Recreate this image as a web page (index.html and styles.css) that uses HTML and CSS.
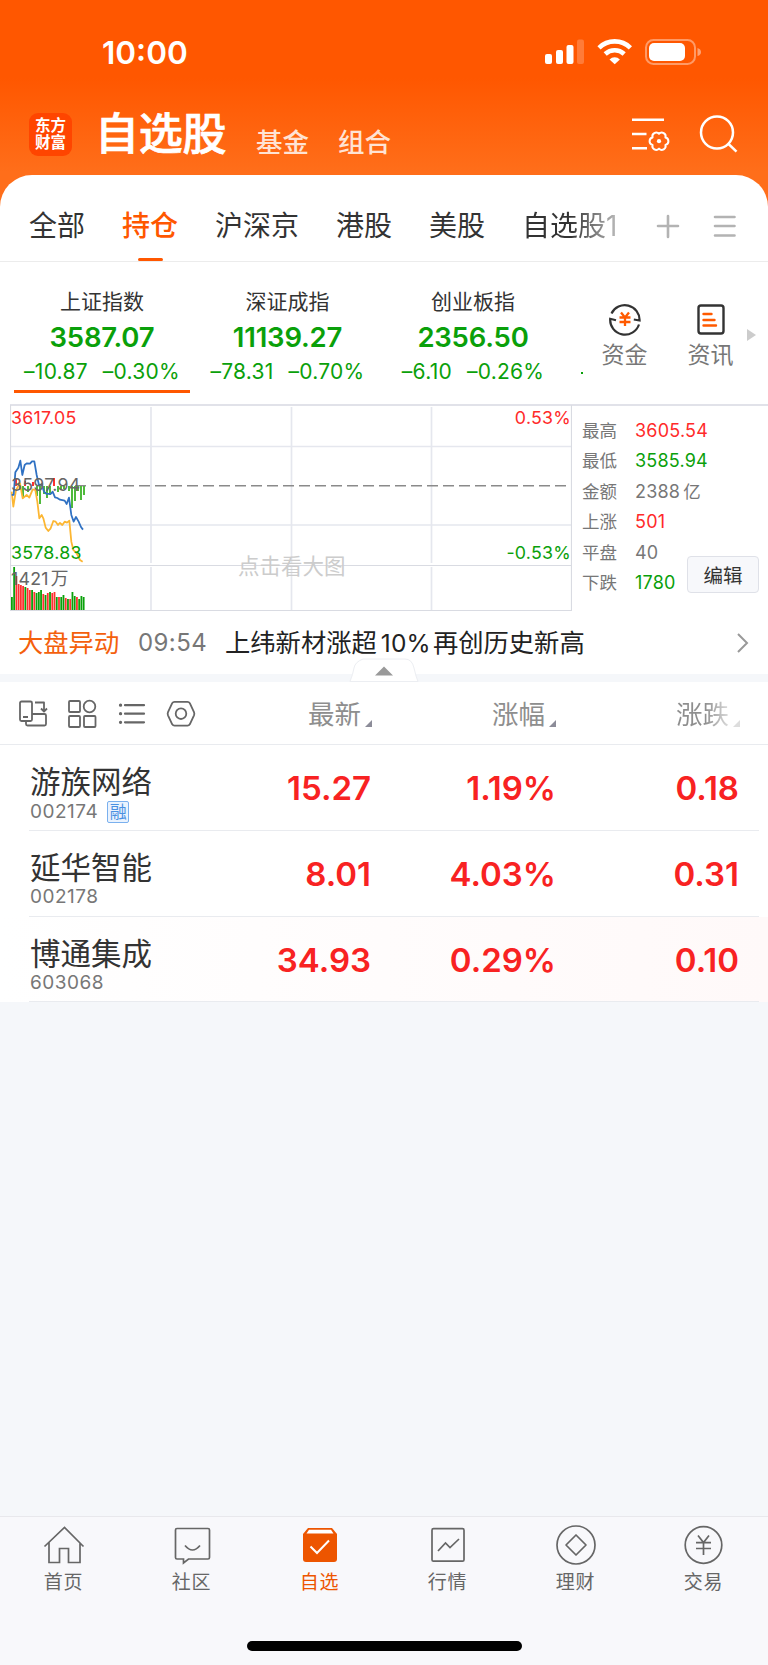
FILE: index.html
```html
<!DOCTYPE html>
<html lang="zh-CN">
<head>
<meta charset="utf-8">
<title>自选股</title>
<link rel="stylesheet" href="styles.css">
</head>
<body>
<div class="app">
  <header class="header">
    <div class="status">
      <span class="clock">10:00</span>
      <svg class="status-icons" width="160" height="30" viewBox="0 0 160 30" fill="#fff">
        <rect x="1" y="17" width="7" height="10" rx="2"/>
        <rect x="12" y="13" width="7" height="14" rx="2"/>
        <rect x="22.500" y="8" width="7" height="19" rx="2"/>
        <rect x="33" y="2.500" width="7" height="24.500" rx="2" opacity=".22"/>
        <g fill="none" stroke="#fff" stroke-width="4.600">
          <path d="M55 10.800a22.500 22.500 0 0 1 31.400 0"/>
          <path d="M61.200 17a14 14 0 0 1 19 0"/>
        </g>
        <path d="M70.700 27.200l-5.200-4.800a7.600 7.600 0 0 1 10.400 0z"/>
        <rect x="102" y="3" width="49" height="24" rx="7.500" fill="none" stroke="#fff" stroke-width="2" opacity=".4"/>
        <rect x="105" y="6" width="36" height="18" rx="5"/>
        <path d="M153.500 11v8q3.500-1 3.500-4t-3.500-4z" opacity=".45"/>
      </svg>
    </div>
    <div class="nav">
      <div class="logo">东方财富</div>
      <h1 class="title">自选股</h1>
      <span class="subnav">基金</span>
      <span class="subnav">组合</span>
      <svg class="nav-icons" width="110" height="44" viewBox="0 0 110 44" fill="none" stroke="#fff" stroke-width="2.500">
        <path d="M2 7.700h32M2 22h14.500M2 36.300h15"/>
        <path transform="translate(29 29.200)" d="M6.430-3.710a3.800 3.800 0 0 1 0 7.420a3.800 3.800 0 0 1-6.430 3.710a3.800 3.800 0 0 1-6.430-3.710a3.800 3.800 0 0 1 0-7.420a3.800 3.800 0 0 1 6.430-3.710a3.800 3.800 0 0 1 6.430 3.710z" stroke-width="2" stroke-linejoin="round"/>
        <circle cx="29" cy="29.200" r="2.100" fill="#fff" stroke="none"/>
        <circle cx="87" cy="20.500" r="16"/>
        <path d="M98 31.500l8.500 8.200"/>
      </svg>
    </div>
  </header>

  <main class="panel">
    <nav class="tabs">
      <span class="tab">全部</span>
      <span class="tab tab-on">持仓</span>
      <span class="tab">沪深京</span>
      <span class="tab">港股</span>
      <span class="tab">美股</span>
      <span class="tab tab-fade">自选股1</span>
      <svg class="tab-tools" width="84" height="26" viewBox="0 0 84 26" fill="none" stroke="#b3b3b3" stroke-width="2.600" stroke-linecap="round">
        <path d="M2 13h20M12 3v21M59 4h19.500M59 13h19.500M59 22.500h19.500"/>
      </svg>
    </nav>

    <section class="indices">
      <div class="index index-on"><span class="iname">上证指数</span><b class="ival">3587.07</b><span class="ichg"><i>–10.87</i><i>–0.30%</i></span></div>
      <div class="index"><span class="iname">深证成指</span><b class="ival">11139.27</b><span class="ichg"><i>–78.31</i><i>–0.70%</i></span></div>
      <div class="index"><span class="iname">创业板指</span><b class="ival">2356.50</b><span class="ichg"><i>–6.10</i><i>–0.26%</i></span></div>
      <span class="index-peek"></span>
      <div class="shortcut">
        <svg width="34" height="34" viewBox="0 0 34 34" fill="none" stroke="#333" stroke-width="2.200">
          <path d="M3.500 11.500A14.800 14.800 0 0 1 31.600 18.500L25.800 17.500M31 22.500A14.800 14.800 0 0 1 2.200 16.800L8 18.300"/>
          <path d="M13 10.500l4 5 4-5M11.500 15.500h11M11.500 20h11M17 15.500v8.500" stroke="#ff5a00" stroke-width="2.300"/>
        </svg>
        <span>资金</span>
      </div>
      <div class="shortcut">
        <svg width="34" height="34" viewBox="0 0 34 34" fill="none" stroke="#333" stroke-width="2.400">
          <rect x="4.500" y="3.500" width="25" height="28" rx="2.500"/>
          <path d="M9.500 12h8M9.500 18h11M9.500 23.500h12.500" stroke="#ff5a00" stroke-linecap="round"/>
        </svg>
        <span>资讯</span>
      </div>
      <span class="more"></span>
    </section>

    <section class="market">
      <svg class="chart" width="562" height="208" viewBox="10 404 562 208">
        <g stroke="#e5e7ee" stroke-width="1.700">
          <path d="M151 407v156M151 567v43M291.500 407v156M291.500 567v43M431.500 407v156M431.500 567v43M11 446.500h560M11 525h560"/>
        </g>
        <path d="M10.500 405v205.500h561V405M10 565.500h562" fill="none" stroke="#d9dbe2" stroke-width="1.200"/>
        <path d="M75 485.800h496" stroke="#8a8a8a" stroke-width="1.600" stroke-dasharray="11 5"/>
        <text class="hint" x="238" y="573.500">点击看大图</text>
        <g id="bars"></g>
        <path d="M15 479h2v7h-2zM24 481h2v5h-2zM32 482h2v4h-2zM53 478h2v8h-2z" fill="#ff3030"/>
        <path d="M19 486h2v4h-2zM22 486h2v12h-2zM27 486h2v6h-2zM36 486h2v10h-2zM39 486h2v18h-2zM43 486h2v8h-2zM46 486h2v12h-2zM49 486h2v9h-2zM57 486h2v6h-2zM60 486h2v4h-2zM63 486h2v3h-2zM68 486h2v5h-2zM71 486h2v22h-2zM74 486h2v15h-2zM77 486h2v5h-2zM80 486h2v14h-2zM83 486h2v9h-2z" fill="#4fba3c"/>
        <g transform="translate(0 395) scale(.3333)" fill="none" stroke-width="5.300" stroke-linejoin="round">
          <polyline stroke="#fcb632" points="35,290 40,335 48,285 60,265 68,310 80,300 88,308 98,283 106,285 112,320 118,370 125,360 130,370 137,398 145,408 152,400 160,378 167,380 174,390 180,384 187,390 194,380 201,383 208,377 214,440 220,465 230,475 240,495 248,500"/>
          <polyline stroke="#2f71c3" points="35,300 41,300 46,232 55,218 61,197 67,240 74,210 80,205 90,206 96,199 103,199 110,240 117,270 125,268 132,290 140,297 152,297 158,290 165,307 172,309 180,314 194,317 200,327 207,308 214,360 221,380 228,366 236,380 243,396 249,404"/>
        </g>
        <g class="axis">
          <text x="11" y="423.500" fill="#ff2a2a">3617.05</text>
          <text x="11" y="491" fill="#666">3597.94</text>
          <text x="11" y="559" fill="#0aa00a">3578.83</text>
          <text x="571" y="423.500" fill="#ff2a2a" text-anchor="end">0.53%</text>
          <text x="571" y="559" fill="#0aa00a" text-anchor="end">-0.53%</text>
          <text x="11" y="584.500" fill="#666">1421<tspan dx="2">万</tspan></text>
        </g>
      </svg>
      <dl class="stats">
        <div><dt>最高</dt><dd class="up">3605.54</dd></div>
        <div><dt>最低</dt><dd class="down">3585.94</dd></div>
        <div><dt>金额</dt><dd>2388<span class="unit">亿</span></dd></div>
        <div><dt>上涨</dt><dd class="up">501</dd></div>
        <div><dt>平盘</dt><dd>40</dd></div>
        <div><dt>下跌</dt><dd class="down">1780</dd></div>
      </dl>
      <button class="edit">编辑</button>
    </section>

    <section class="news">
      <span class="news-tag">大盘异动</span>
      <span class="news-time">09:54</span>
      <span class="news-text">上纬新材涨超<em>10%</em>再创历史新高</span>
      <svg class="news-arrow" width="14" height="22" viewBox="0 0 14 22" fill="none" stroke="#999" stroke-width="2"><path d="M2 2l9 9-9 9"/></svg>
    </section>
    <div class="divider">
      <svg class="handle" width="70" height="25" viewBox="0 0 70 25">
        <path d="M1 23.500Q4 16 5 10T14 1H56q7 0 9 9t4 13.500z" fill="#fff" stroke="#eceef2" stroke-width="1"/>
        <path d="M26 17.500l9-9 9 9z" fill="#999"/>
      </svg>
    </div>

    <section class="cols">
      <svg class="tools" width="180" height="30" viewBox="0 0 180 30" fill="none" stroke="#666" stroke-width="1.800" stroke-linejoin="round">
        <rect x="2" y="2.500" width="12" height="19.500" rx="1.500"/>
        <path d="M5 18h5M17 3.500h9v9M23 9.500l3 3 3-3M8 22v3q0 1.500 1.500 1.500h17q1.500 0 1.500-1.500v-8.500q0-1.500-1.500-1.500H14"/>
        <rect x="51" y="2" width="11" height="11" rx="1"/><circle cx="71.500" cy="7.500" r="5.800"/>
        <rect x="51" y="17" width="11" height="11" rx="1"/><rect x="66" y="17" width="11.500" height="11" rx="1"/>
        <path d="M107 6.200h19M107 14.700h19M107 23.300h19" stroke-width="2.200" stroke-linecap="round"/>
        <path d="M102.500 6.200h.1M102.500 14.700h.1M102.500 23.300h.1" stroke-width="3.200" stroke-linecap="round"/>
        <path d="M156.500 2.800h13q1.500 0 2.300 1.300l4.200 9q.7 1.600 0 3.200l-4.200 9q-.8 1.300-2.300 1.300h-13q-1.500 0-2.300-1.300l-4.200-9q-.7-1.600 0-3.200l4.200-9q.8-1.300 2.300-1.300z"/>
        <circle cx="163" cy="14.700" r="5.300"/>
      </svg>
      <span class="col c1">最新</span>
      <span class="col c2">涨幅</span>
      <span class="col c3">涨跌</span>
    </section>

    <section class="list">
      <article class="row">
        <div class="stock"><span class="sname">游族网络</span><span class="code">002174 <i class="badge">融</i></span></div>
        <b class="c1">15.27</b><b class="c2">1.19%</b><b class="c3">0.18</b>
      </article>
      <article class="row">
        <div class="stock"><span class="sname">延华智能</span><span class="code">002178</span></div>
        <b class="c1">8.01</b><b class="c2">4.03%</b><b class="c3">0.31</b>
      </article>
      <article class="row row-flash">
        <div class="stock"><span class="sname">博通集成</span><span class="code">603068</span></div>
        <b class="c1">34.93</b><b class="c2">0.29%</b><b class="c3">0.10</b>
      </article>
    </section>
  </main>

  <footer class="tabbar">
    <div class="items">
      <div class="item"><svg viewBox="0 0 42 42"><path d="M1.500 21.500L21.500 2.500l19 19M6 17.500v20h10.500V23.500h9V37.500H37v-20"/></svg><span>首页</span></div>
      <div class="item"><svg viewBox="0 0 42 42"><path d="M6 3.500h31q1.500 0 1.500 1.500v27.500q0 1.500-1.500 1.500H17.500l-5 4v-4H6q-1.500 0-1.500-1.500V5q0-1.500 1.500-1.500zM14 20.500q7.500 9 15 0"/></svg><span>社区</span></div>
      <div class="item item-on"><svg viewBox="0 0 42 42"><path d="M9 3h24l5 6v25q0 3-3 3H7q-3 0-3-3V9z" fill="#ed5500" stroke="none"/><path d="M10 4.700h22l2.500 3.800h-27z" fill="#fff" stroke="none"/><path d="M11.500 21.500l6.500 6.500L30 15.500" stroke="#fff" stroke-width="2"/></svg><span>自选</span></div>
      <div class="item"><svg viewBox="0 0 42 42"><rect x="5" y="3.700" width="32" height="32.500" rx="1.500"/><path d="M11 26l7.500-8 4.500 4.500 9-8.500"/></svg><span>行情</span></div>
      <div class="item"><svg viewBox="0 0 42 42"><circle cx="21" cy="20" r="19"/><path d="M21 10l10 10-10 10-10-10z" stroke-linejoin="round"/></svg><span>理财</span></div>
      <div class="item"><svg viewBox="0 0 42 42"><circle cx="20.500" cy="20" r="18.300"/><path d="M15 10.500l5.500 7 5.500-7M13 17.700h15M13 23.500h15M20.500 17.500V30"/></svg><span>交易</span></div>
    </div>
    <div class="home"></div>
  </footer>
</div>
<script src="chart.js"></script>
</body>
</html>
```

FILE: styles.css
```css
* { box-sizing: border-box; margin: 0; padding: 0; }
body { font-family: Inter, "Noto Sans CJK SC", sans-serif; background: #f5f7fa; color: #333; }
i, em { font-style: normal; }
svg { display: block; flex: none; }
.app { width: 768px; height: 1665px; display: flex; flex-direction: column; background: #f5f7fa; overflow: hidden; }

.header { height: 215px; margin-bottom: -40px; flex: none; background: linear-gradient(#ff5700 0 78px, #ff6e1a 172px); color: #fff; }
.status { height: 104px; padding: 37px 67px 0 102px; display: flex; justify-content: space-between; }
.clock { font-size: 31.500px; font-weight: 600; line-height: 31px; }
.status-icons { margin-right: -3px; }
.nav { display: flex; align-items: center; height: 60px; padding-left: 29px; }
.logo { width: 43px; height: 43px; border-radius: 9px; background: #ff4500; padding: 4px 5px 0 6px; word-break: break-all; font-weight: 700; font-size: 15.500px; line-height: 17.500px; }
.title { font-size: 44px; line-height: 60px; font-weight: 500; margin-left: 23px; width: 133px; white-space: nowrap; -webkit-text-stroke: .7px #fff; letter-spacing: -.3px; }
.subnav { font-size: 26.500px; line-height: 30px; font-weight: 500; margin: 15px 0 0 28px; color: #ffe3d4; }
.subnav + .subnav { margin-left: 29px; }
.nav-icons { margin: 0 28px 0 auto; }

.panel { background: #fff; border-radius: 32px 32px 0 0; flex: none; position: relative; }
.tabs { height: 87px; display: flex; align-items: center; gap: 37px; padding: 16px 0 0 29px; border-bottom: 1px solid #ececec; font-size: 28px; color: #333; }
.tab { line-height: 66px; white-space: nowrap; height: 66px; }
.tab-on { color: #ff5700; font-weight: 500; position: relative; }
.tab-on::after { content: ""; position: absolute; left: 16px; bottom: -2px; width: 25px; height: 3px; border-radius: 2px; background: #ff5700; }
.tab-fade { width: 97px; background: linear-gradient(90deg, #333 50%, #bbb 98%); background-clip: text; -webkit-background-clip: text; color: transparent; }

.indices { height: 142px; display: flex; padding-left: 14px; }
.index { width: 176px; margin-right: 9.500px; height: 131px; padding-top: 28px; display: flex; flex-direction: column; align-items: center; border-bottom: 3.500px solid transparent; }
.index-on { border-color: #ff5700; }
.iname { font-size: 21px; line-height: 24px; }
.ival { font-size: 27.500px; line-height: 46px; font-weight: 600; color: #0aa00a; letter-spacing: -.2px; }
.ichg { display: flex; gap: 15px; font-size: 21px; line-height: 23px; color: #0aa00a; white-space: nowrap; letter-spacing: .25px; }
.index-peek { width: 2px; height: 2px; margin: 110px 0 0 10px; background: #0aa00a; }
.shortcut { width: 86px; display: flex; flex-direction: column; align-items: center; padding-top: 40px; margin-left: -1px; margin-right: 1px; font-size: 23px; line-height: 38px; color: #777; }
.more { width: 0; height: 0; margin: 67px 0 0 -8px; border: 6px solid transparent; border-left: 9px solid #ccc; border-right: 0; }

.market { height: 207px; display: flex; margin-left: 10px; border-top: 2px solid #e1e2e9; position: relative; }
.chart { margin-top: -2px; }
.axis { font-size: 17.800px; letter-spacing: .25px; }
.hint { font-size: 21.500px; fill: #ccc; }
.stats { padding: 10px 0 0 10px; font-size: 18px; color: #777; }
.stats div { display: flex; height: 30.400px; line-height: 30.400px; }
.stats dt { width: 53px; font-size: 17.500px; }
.stats dd { letter-spacing: .2px; }
.unit { margin-left: 3px; font-size: 17.500px; }
.stats .up { color: #ff2a2a; }
.stats .down { color: #0aa00a; }
.edit { position: absolute; right: 9px; top: 150px; width: 72px; height: 37px; border: 1px solid #dfe1e8; border-radius: 4px; background: #f7f8fb; font: 19.500px "Noto Sans CJK SC", sans-serif; color: #333; line-height: 34px; }

.news { height: 63px; padding: 0 18px; display: flex; align-items: center; line-height: 60px; font-size: 25.300px; }
.news-tag { color: #f4600c; width: 120px; }
.news-time { color: #777; font-size: 24px; width: 87px; letter-spacing: .4px; }
.news-text { color: #222; white-space: nowrap; }
.news-text em { font-size: 24.500px; margin: 0 2px 0 4px; letter-spacing: .2px; }
.news-arrow { margin-left: auto; }
.divider { height: 8px; background: #f5f7fa; position: relative; }
.handle { position: absolute; left: 349px; top: -16px; }

.cols { height: 63px; display: flex; align-items: center; border-bottom: 1px solid #e9ebef; padding: 2px 0 0 18px; color: #8e8e8e; font-size: 26.500px; line-height: 60px; }
.tools { margin-right: 83px; }
.col { position: relative; }
.col::after { content: ""; position: absolute; right: -11px; top: 36px; border-left: 7px solid transparent; border-bottom: 7px solid #8c8c98; }
.cols .col { width: 53px; margin-left: 27px; }
.cols .c2 { margin-left: 131px; }
.cols .c3 { margin-left: 131px; background: linear-gradient(90deg, #8e8e8e 55%, #ddd); background-clip: text; -webkit-background-clip: text; color: transparent; }
.cols .c3::after { border-bottom-color: #ddd; }

.row { height: 85.800px; display: flex; position: relative; line-height: 86px; }
.row::after { content: ""; position: absolute; left: 29px; right: 9px; bottom: 0; height: 1px; background: #e9ebef; }
.row-flash { background: linear-gradient(90deg, #fff, #fff9f9); }
.stock { width: 211px; padding: 18px 0 0 30px; display: flex; flex-direction: column; }
.sname { font-size: 30.500px; line-height: 38px; }
.code { font-size: 19px; line-height: 20px; color: #777; display: flex; align-items: center; gap: 9px; letter-spacing: .5px; }
.badge { width: 22px; height: 22px; border: 1px solid #7ab0ee; border-radius: 2px; background: #eaf3fe; color: #4a90e2; font-size: 17px; line-height: 20px; text-align: center; letter-spacing: 0; }
.row b { font-size: 33px; font-weight: 600; color: #f82222; text-align: right; }
.row .c1 { width: 160px; }
.row .c2 { width: 185px; }
.row .c3 { width: 183px; }

.tabbar { margin-top: auto; height: 149px; border-top: 1px solid #e8e8ec; background: #f8f8fb; flex: none; display: flex; flex-direction: column; align-items: center; }
.items { display: flex; width: 768px; height: 124px; }
.item { width: 128px; padding-top: 8px; display: flex; flex-direction: column; align-items: center; font-size: 19px; line-height: 30px; color: #666; }
.item svg { width: 42px; height: 42px; fill: none; stroke: #666; stroke-width: 1.700; }
.item span { letter-spacing: .8px; margin: 1px 0 0 -1px; }
.item-on { color: #ed5500; }
.home { width: 275px; height: 9.500px; border-radius: 5px; background: #000; }
```

FILE: chart.js
```js
// Volume bars: [height, colour] per minute, drawn upward from the baseline.
const red = '#ff3030', green = '#0aa00a';
const volume = [
  [13, green], [43, green], [34, red], [26, red], [25, red], [24, red], [23, green], [22, red],
  [20, red], [20, green], [18, red], [17, green], [18, green], [20, green], [16, red], [15, green],
  [17, red], [18, green], [17, red], [18, red], [13, green], [13, red], [13, green], [15, green],
  [12, red], [11, green], [11, red], [18, green], [14, green], [13, red], [11, green], [14, green], [13, green]
];
const step = 74 / volume.length;
document.getElementById('bars').innerHTML = volume.map(([h, c], i) =>
  `<rect x="${11 + i * step}" y="${610 - h}" width="1.800" height="${h}" fill="${c}"/>`).join('');
```
